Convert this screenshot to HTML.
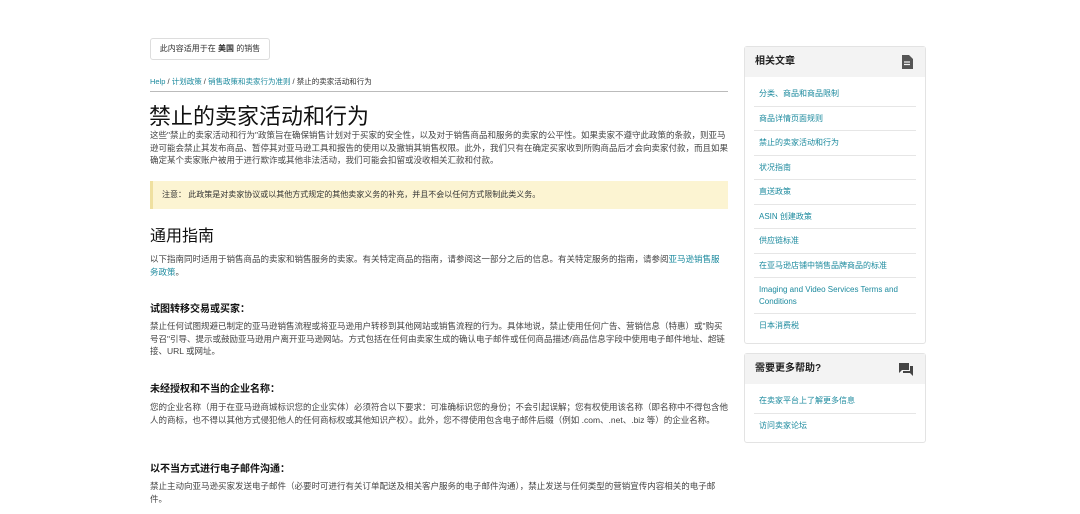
<!DOCTYPE html>
<html><head><meta charset="utf-8"><style>
body{margin:0;width:1080px;height:514px;background:#fff;font-family:"Liberation Sans","Noto Sans CJK SC",sans-serif;color:#333;position:relative;overflow:hidden}
.a{position:absolute}
.p{font-size:8.5px;line-height:12.5px;color:#444;width:578px;left:150px}
a{color:#1c8a9e}
.h3{font-size:10px;font-weight:bold;color:#111;left:150px}
.side{position:absolute;left:744px;width:180px;border:1px solid #e3e3e3;border-radius:3px;background:#fff}
.sh{height:30px;background:#f3f3f3;font-size:10px;font-weight:bold;line-height:30px;padding-left:10px;color:#222;position:relative}
.sl{margin:0 9px;border-bottom:1px solid #e6e6e6;font-size:8px;color:#1c8a9e;padding:6px 5px 6px;line-height:11.5px}
</style></head><body>
<div class="a" style="left:150px;top:38px;width:118px;height:20px;border:1px solid #ddd;border-radius:3px;font-size:8px;line-height:20px;text-align:center;color:#333">此内容适用于在 <b>美国</b> 的销售</div>
<div class="a" style="left:150px;top:76px;font-size:7.5px;color:#333"><a>Help</a> / <a>计划政策</a> / <a>销售政策和卖家行为准则</a> / 禁止的卖家活动和行为</div>
<div class="a" style="left:150px;top:91px;width:578px;height:1px;background:#bbb"></div>
<div class="a" style="left:149px;top:103px;font-size:22px;color:#111;line-height:28px">禁止的卖家活动和行为</div>
<div class="a p" style="top:129px">这些"禁止的卖家活动和行为"政策旨在确保销售计划对于买家的安全性，以及对于销售商品和服务的卖家的公平性。如果卖家不遵守此政策的条款，则亚马逊可能会禁止其发布商品、暂停其对亚马逊工具和报告的使用以及撤销其销售权限。此外，我们只有在确定买家收到所购商品后才会向卖家付款，而且如果确定某个卖家账户被用于进行欺诈或其他非法活动，我们可能会扣留或没收相关汇款和付款。</div>
<div class="a" style="left:150px;top:181px;height:28px;background:#fcf4d2;border-left:3px solid #efe0a0;font-size:8px;line-height:28px;padding-left:9px;box-sizing:border-box;width:578px;color:#333">注意： 此政策是对卖家协议或以其他方式规定的其他卖家义务的补充，并且不会以任何方式限制此类义务。</div>
<div class="a" style="left:150px;top:226px;font-size:16px;color:#111;line-height:22px">通用指南</div>
<div class="a p" style="top:253px">以下指南同时适用于销售商品的卖家和销售服务的卖家。有关特定商品的指南，请参阅这一部分之后的信息。有关特定服务的指南，请参阅<a>亚马逊销售服务政策</a>。</div>
<div class="a h3" style="top:300px">试图转移交易或买家：</div>
<div class="a p" style="top:320px">禁止任何试图规避已制定的亚马逊销售流程或将亚马逊用户转移到其他网站或销售流程的行为。具体地说，禁止使用任何广告、营销信息（特惠）或"购买号召"引导、提示或鼓励亚马逊用户离开亚马逊网站。方式包括在任何由卖家生成的确认电子邮件或任何商品描述/商品信息字段中使用电子邮件地址、超链接、URL 或网址。</div>
<div class="a h3" style="top:380px">未经授权和不当的企业名称：</div>
<div class="a p" style="top:401px">您的企业名称（用于在亚马逊商城标识您的企业实体）必须符合以下要求：可准确标识您的身份；不会引起误解；您有权使用该名称（即名称中不得包含他人的商标，也不得以其他方式侵犯他人的任何商标权或其他知识产权）。此外，您不得使用包含电子邮件后缀（例如 .com、.net、.biz 等）的企业名称。</div>
<div class="a h3" style="top:460px">以不当方式进行电子邮件沟通：</div>
<div class="a p" style="top:480px">禁止主动向亚马逊买家发送电子邮件（必要时可进行有关订单配送及相关客户服务的电子邮件沟通），禁止发送与任何类型的营销宣传内容相关的电子邮件。</div>

<div class="side" style="top:46px;height:296px">
<div class="sh">相关文章<svg class="a" style="right:12px;top:8px" width="12" height="14" viewBox="0 0 12 14"><path d="M1 0h7l4 4v10H1z" fill="#555"/><path d="M3 7h6M3 9.5h6" stroke="#f3f3f3" stroke-width="1.2"/></svg></div>
<div style="height:5px"></div>
<div class="sl">分类、商品和商品限制</div>
<div class="sl">商品详情页面规则</div>
<div class="sl">禁止的卖家活动和行为</div>
<div class="sl">状况指南</div>
<div class="sl">直送政策</div>
<div class="sl">ASIN 创建政策</div>
<div class="sl">供应链标准</div>
<div class="sl">在亚马逊店铺中销售品牌商品的标准</div>
<div class="sl">Imaging and Video Services Terms and Conditions</div>
<div class="sl" style="border:0">日本消费税</div>
</div>
<div class="side" style="top:353px;height:88px">
<div class="sh">需要更多帮助?<svg class="a" style="right:12px;top:9px" width="14" height="13" viewBox="0 0 14 13"><path d="M0 0h10v7H3l-3 3z" fill="#444"/><path d="M11 3h3v10l-3-3H4V8h7z" fill="#444"/></svg></div>
<div style="height:5px"></div>
<div class="sl">在卖家平台上了解更多信息</div>
<div class="sl" style="border:0">访问卖家论坛</div>
</div>
</body></html>
